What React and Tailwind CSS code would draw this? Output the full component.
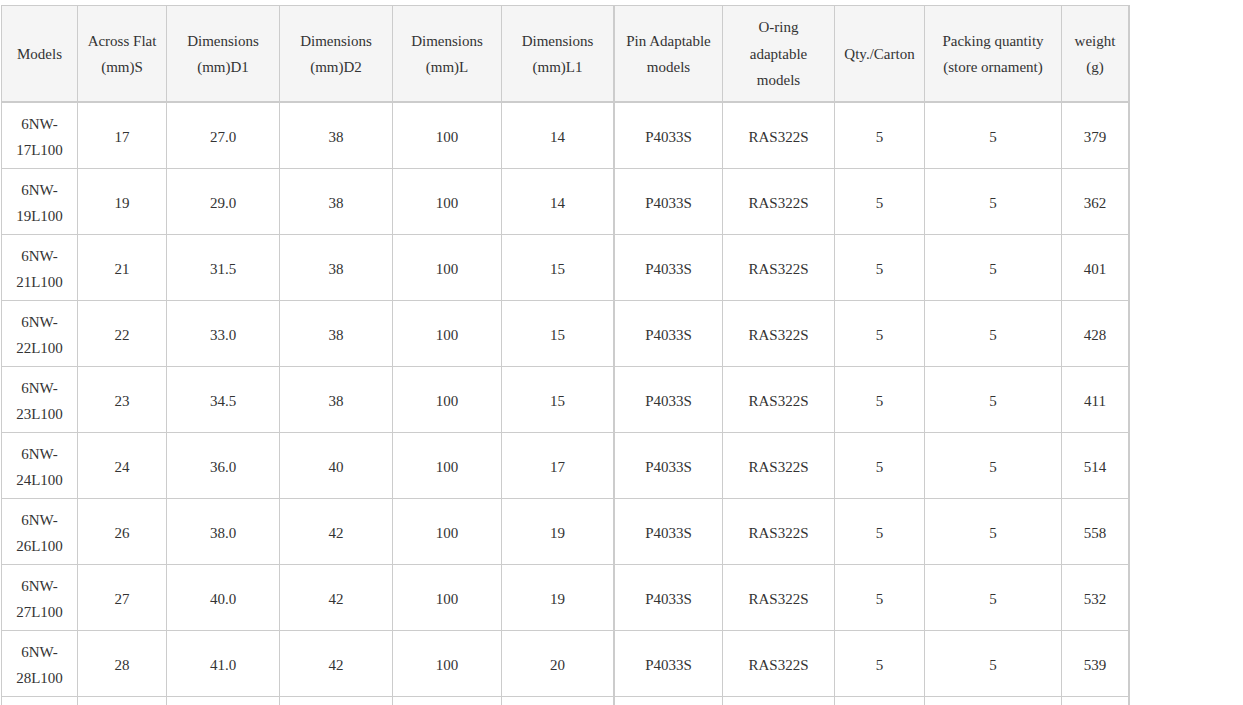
import React from "react";

const headers = [
  ["Models"],
  ["Across Flat", "(mm)S"],
  ["Dimensions", "(mm)D1"],
  ["Dimensions", "(mm)D2"],
  ["Dimensions", "(mm)L"],
  ["Dimensions", "(mm)L1"],
  ["Pin Adaptable", "models"],
  ["O-ring", "adaptable", "models"],
  ["Qty./Carton"],
  ["Packing quantity", "(store ornament)"],
  ["weight", "(g)"],
];

const rows = [
  ["17", "27.0", "38", "100", "14", "379"],
  ["19", "29.0", "38", "100", "14", "362"],
  ["21", "31.5", "38", "100", "15", "401"],
  ["22", "33.0", "38", "100", "15", "428"],
  ["23", "34.5", "38", "100", "15", "411"],
  ["24", "36.0", "40", "100", "17", "514"],
  ["26", "38.0", "42", "100", "19", "558"],
  ["27", "40.0", "42", "100", "19", "532"],
  ["28", "41.0", "42", "100", "20", "539"],
  ["30", "43.0", "44", "100", "20", "566"],
];

function borderFor(ci) {
  return ci === 5 || ci === 10 ? "border-r-2" : "border-r";
}

export default function App() {
  return (
    <div className="min-h-screen bg-white">
      <div
        className="ml-px mt-[5px] w-fit border-l border-t border-[#cccccc] text-[15px] leading-[26.5px] text-[#333333] grid grid-cols-[76px_89px_113px_113px_109px_113px_108px_112px_90px_137px_68px]"
        style={{ fontFamily: '"Liberation Serif", "Times New Roman", serif' }}
      >
        {headers.map((h, ci) => (
          <div
            key={"h" + ci}
            className={`h-[97px] pt-px bg-[#f5f5f5] border-b-2 border-[#cccccc] ${borderFor(ci)} flex flex-col items-center justify-center text-center`}
          >
            {h.map((line, li) => (
              <span key={li}>{line}</span>
            ))}
          </div>
        ))}
        {rows.map((r, ri) => {
          const cells = [
            ["6NW-", `${r[0]}L100`],
            [r[0]],
            [r[1]],
            [r[2]],
            [r[3]],
            [r[4]],
            ["P4033S"],
            ["RAS322S"],
            ["5"],
            ["5"],
            [r[5]],
          ];
          return cells.map((c, ci) => (
            <div
              key={ri + "-" + ci}
              className={`h-[66px] pt-[3px] bg-white border-b border-[#cccccc] ${borderFor(ci)} flex flex-col items-center justify-center text-center`}
            >
              {c.map((line, li) => (
                <span key={li}>{line}</span>
              ))}
            </div>
          ));
        })}
      </div>
    </div>
  );
}
